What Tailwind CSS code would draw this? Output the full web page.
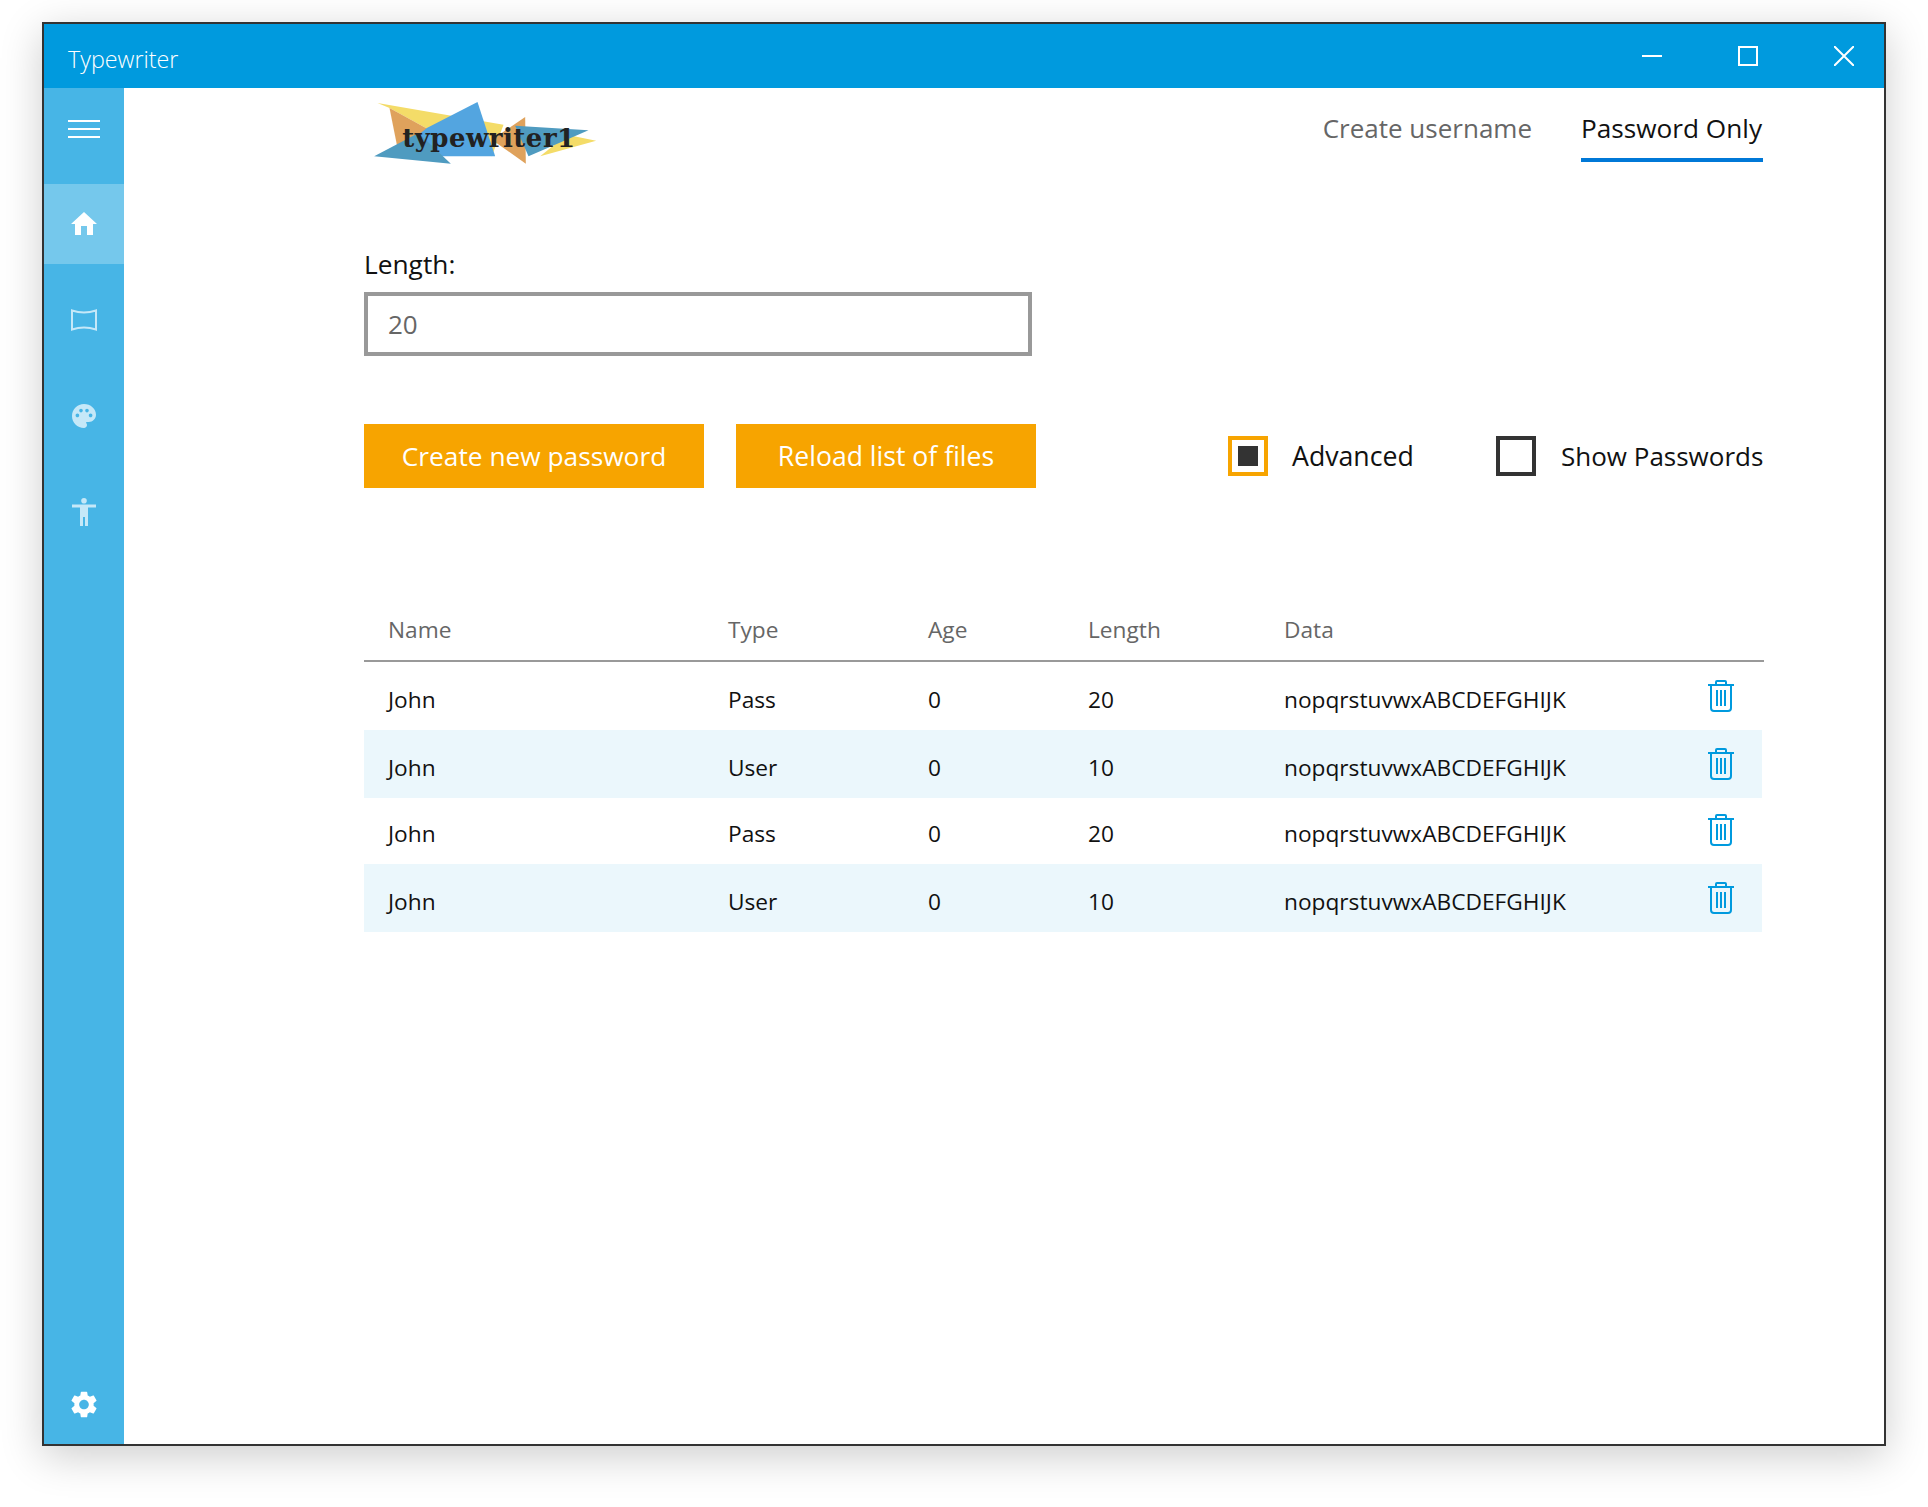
<!DOCTYPE html>
<html lang="en">
<head>
    <meta charset="UTF-8">
    <title>Typewriter</title>
    <script src="https://cdn.jsdelivr.net/npm/@tailwindcss/browser@4"></script>
</head>
<body class="bg-white min-h-screen pt-[22px] pl-[42px] font-['Open_Sans',sans-serif] text-[#111]">
    <div class="w-[1844px] h-[1424px] border-2 border-[#333] bg-white flex flex-col shadow-[0_10px_40px_rgba(0,0,0,0.2)]">
        <!-- title bar -->
        <div class="h-[64px] shrink-0 bg-[#009ade] flex items-start text-white">
            <div class="pl-[24px] pt-[19px] text-[23.3px] leading-[32px] font-light flex-1">Typewriter</div>
            <div class="w-[20px] h-[2px] bg-white mt-[31px]"></div>
            <div class="w-[20px] h-[20px] border-2 border-white mt-[22px] ml-[76px]"></div>
            <svg class="mt-[22px] ml-[76px] mr-[30px]" width="20" height="20" viewBox="0 0 20 20" fill="none" stroke="white" stroke-width="2"><path d="M0 0 L20 20 M20 0 L0 20"/></svg>
        </div>
        <div class="flex flex-1 min-h-0">
            <!-- sidebar -->
            <div class="w-[80px] shrink-0 bg-[#47b5e6] flex flex-col">
                <div class="h-[80px] mb-4 flex flex-col items-center justify-center gap-[6px] pt-[2px]">
                    <div class="w-[32px] h-[2px] bg-white"></div>
                    <div class="w-[32px] h-[2px] bg-white"></div>
                    <div class="w-[32px] h-[2px] bg-white"></div>
                </div>
                <div class="h-[80px] mb-4 bg-[#75c8ec] flex items-center justify-center pb-[2px]">
                    <svg width="26" height="23" viewBox="0 0 26 23" fill="white"><path d="M13 0 L26 12 H22 V23 H16 V14 H10 V23 H4 V12 H0 Z"/></svg>
                </div>
                <div class="h-[80px] mb-4 flex items-center justify-center">
                    <svg width="26" height="22" viewBox="0 0 26 22" fill="none" stroke="#c5e8f8" stroke-width="2"><path d="M1 1.5 Q13 5.5 25 1.5 V20.5 Q13 16.5 1 20.5 Z"/></svg>
                </div>
                <div class="h-[80px] mb-4 flex items-center justify-center">
                    <svg width="24" height="24" viewBox="2 2 20 20" fill="#c5e8f8"><path d="M12 2C6.49 2 2 6.49 2 12s4.49 10 10 10c1.38 0 2.5-1.12 2.5-2.5 0-.61-.23-1.2-.64-1.67-.08-.1-.13-.21-.13-.33 0-.28.22-.5.5-.5H16c3.31 0 6-2.69 6-6 0-4.96-4.49-9-10-9zM6.5 13c-.83 0-1.5-.67-1.5-1.5S5.67 10 6.5 10 8 10.67 8 11.5 7.33 13 6.5 13zm3-4C8.67 9 8 8.33 8 7.5S8.67 6 9.5 6s1.5.67 1.5 1.5S10.33 9 9.5 9zm5 0c-.83 0-1.5-.67-1.5-1.5S13.67 6 14.5 6s1.5.67 1.5 1.5S15.33 9 14.5 9zm3 4c-.83 0-1.5-.67-1.5-1.5s.67-1.5 1.5-1.5 1.5.67 1.5 1.5-.67 1.5-1.5 1.5z"/></svg>
                </div>
                <div class="h-[80px] flex items-center justify-center">
                    <svg width="24" height="28" viewBox="0 0 24 28" fill="#c5e8f8"><circle cx="12" cy="2.8" r="2.8"/><path d="M0 6.5 H24 V9.5 H16 V28 H13 V19 H11 V28 H8 V9.5 H0 Z"/></svg>
                </div>
                <div class="h-[80px] mt-auto flex items-center justify-center">
                    <svg width="26" height="27" viewBox="2.3 2 19.4 20" fill="white"><path d="M19.14 12.94c.04-.3.06-.61.06-.94 0-.32-.02-.64-.07-.94l2.03-1.58c.18-.14.23-.41.12-.61l-1.92-3.32c-.12-.22-.37-.29-.59-.22l-2.39.96c-.5-.38-1.03-.7-1.62-.94l-.36-2.54c-.04-.24-.24-.41-.48-.41h-3.84c-.24 0-.43.17-.47.41l-.36 2.54c-.59.24-1.13.57-1.62.94l-2.39-.96c-.22-.08-.47 0-.59.22L2.74 8.87c-.12.21-.08.47.12.61l2.03 1.58c-.05.3-.09.63-.09.94s.02.64.07.94l-2.03 1.58c-.18.14-.23.41-.12.61l1.92 3.32c.12.22.37.29.59.22l2.39-.96c.5.38 1.03.7 1.62.94l.36 2.54c.05.24.24.41.48.41h3.84c.24 0 .44-.17.47-.41l.36-2.54c.59-.24 1.13-.56 1.62-.94l2.39.96c.22.08.47 0 .59-.22l1.92-3.32c.12-.22.07-.47-.12-.61l-2.01-1.58zM12 15.6c-1.98 0-3.6-1.62-3.6-3.6s1.62-3.6 3.6-3.6 3.6 1.62 3.6 3.6-1.62 3.6-3.6 3.6z"/></svg>
                </div>
            </div>
            <!-- content -->
            <div class="w-[1400px] ml-[240px]">
                <div class="flex h-[74px]">
                    <svg class="ml-[10px] mt-[14px]" width="223" height="62" viewBox="42 37 668 186">
                        <polygon points="52,40 430,105 395,200 215,125 88,55" fill="#f4dc68"/>
                        <polygon points="88,55 215,125 190,150 112,175" fill="#dfa25c"/>
                        <polygon points="352,37 405,200 190,200 175,135 200,115" fill="#53a5e0"/>
                        <polygon points="42,200 175,130 272,222" fill="#4f9bc0"/>
                        <polygon points="495,82 497,222 395,150" fill="#dfa25c"/>
                        <polygon points="540,200 708,153 620,135" fill="#f4dc68"/>
                        <polygon points="465,108 685,122 505,200" fill="#4f9bc0"/>
                        <text x="126" y="172" textLength="519" lengthAdjust="spacing" font-family="DejaVu Serif" font-weight="700" font-size="78" fill="#222">typewriter1</text>
                    </svg>
                    <div class="ml-auto mr-[1px] flex text-[26px]">
                        <div class="h-[74px] pt-[20px] leading-[40px] text-[#666]">Create username</div>
                        <div class="h-[74px] pt-[20px] leading-[40px] ml-[49px] border-b-4 border-[#0078d7] w-[182px] text-[26.2px]">Password Only</div>
                    </div>
                </div>

                <div class="mt-[83px] text-[26.3px] leading-[38px]">Length:</div>
                <input class="mt-[9px] block w-[668px] h-[64px] border-4 border-[#999] pl-5 text-[26px] text-[#666] outline-none" value="20">

                <div class="mt-[68px] flex items-center text-[26px]">
                    <div class="w-[340px] h-[64px] pt-[1px] bg-[#f7a400] text-white text-[26.3px] flex items-center justify-center">Create new password</div>
                    <div class="w-[300px] h-[64px] pt-[1px] ml-8 bg-[#f7a400] text-white text-[26.6px] flex items-center justify-center">Reload list of files</div>
                    <div class="ml-[192px] w-[40px] h-[40px] border-4 border-[#f7a400] flex items-center justify-center">
                        <div class="w-[20px] h-[20px] bg-[#333]"></div>
                    </div>
                    <div class="ml-[24px] text-[26.7px]">Advanced</div>
                    <div class="ml-auto w-[40px] h-[40px] border-4 border-[#333]"></div>
                    <div class="ml-[25px] mr-[3px] w-[200px] whitespace-nowrap">Show Passwords</div>
                </div>

                <!-- table -->
                <div class="mt-[112px] h-[62px] border-b-2 border-[#999] grid grid-cols-[364px_200px_160px_196px_1fr] items-center text-[#666] text-[22.7px]">
                    <div class="pl-6">Name</div>
                    <div>Type</div>
                    <div>Age</div>
                    <div>Length</div>
                    <div>Data</div>
                </div>
                <div class="w-[1398px] h-[68px] grid grid-cols-[364px_200px_160px_196px_424px_26px] items-center text-[22.7px]">
                    <div class="pl-6 pt-2">John</div>
                    <div class="pt-2">Pass</div>
                    <div class="pt-2">0</div>
                    <div class="pt-2">20</div>
                    <div class="pt-2">nopqrstuvwxABCDEFGHIJK</div>
                    <svg width="26" height="32" viewBox="0 0 26 32" fill="none" stroke="#009ade" stroke-width="2"><path d="M0 5 H26 M8 5 V2 Q8 1 9 1 H17 Q18 1 18 2 V5 M3 5 V28 Q3 31 6 31 H20 Q23 31 23 28 V5 M9 10 V26 M13 10 V26 M17 10 V26"/></svg>
                </div>
                <div class="w-[1398px] h-[68px] bg-[#ebf7fc] grid grid-cols-[364px_200px_160px_196px_424px_26px] items-center text-[22.7px]">
                    <div class="pl-6 pt-2">John</div>
                    <div class="pt-2">User</div>
                    <div class="pt-2">0</div>
                    <div class="pt-2">10</div>
                    <div class="pt-2">nopqrstuvwxABCDEFGHIJK</div>
                    <svg width="26" height="32" viewBox="0 0 26 32" fill="none" stroke="#009ade" stroke-width="2"><path d="M0 5 H26 M8 5 V2 Q8 1 9 1 H17 Q18 1 18 2 V5 M3 5 V28 Q3 31 6 31 H20 Q23 31 23 28 V5 M9 10 V26 M13 10 V26 M17 10 V26"/></svg>
                </div>
                <div class="w-[1398px] h-[66px] grid grid-cols-[364px_200px_160px_196px_424px_26px] items-center text-[22.7px]">
                    <div class="pl-6 pt-[6px]">John</div>
                    <div class="pt-[6px]">Pass</div>
                    <div class="pt-[6px]">0</div>
                    <div class="pt-[6px]">20</div>
                    <div class="pt-[6px]">nopqrstuvwxABCDEFGHIJK</div>
                    <svg class="mb-[2px]" width="26" height="32" viewBox="0 0 26 32" fill="none" stroke="#009ade" stroke-width="2"><path d="M0 5 H26 M8 5 V2 Q8 1 9 1 H17 Q18 1 18 2 V5 M3 5 V28 Q3 31 6 31 H20 Q23 31 23 28 V5 M9 10 V26 M13 10 V26 M17 10 V26"/></svg>
                </div>
                <div class="w-[1398px] h-[68px] bg-[#ebf7fc] grid grid-cols-[364px_200px_160px_196px_424px_26px] items-center text-[22.7px]">
                    <div class="pl-6 pt-2">John</div>
                    <div class="pt-2">User</div>
                    <div class="pt-2">0</div>
                    <div class="pt-2">10</div>
                    <div class="pt-2">nopqrstuvwxABCDEFGHIJK</div>
                    <svg width="26" height="32" viewBox="0 0 26 32" fill="none" stroke="#009ade" stroke-width="2"><path d="M0 5 H26 M8 5 V2 Q8 1 9 1 H17 Q18 1 18 2 V5 M3 5 V28 Q3 31 6 31 H20 Q23 31 23 28 V5 M9 10 V26 M13 10 V26 M17 10 V26"/></svg>
                </div>
            </div>
        </div>
    </div>
</body>
</html>
